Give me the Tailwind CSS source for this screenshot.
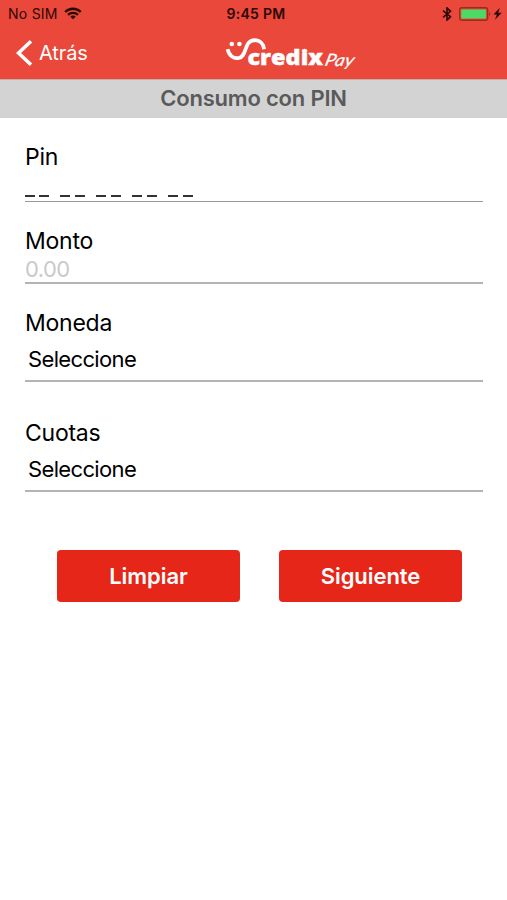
<!DOCTYPE html>
<html lang="es">
<head>
<meta charset="utf-8">
<title>Consumo con PIN</title>
<script src="https://cdn.jsdelivr.net/npm/@tailwindcss/browser@4"></script>
</head>
<body class="bg-white font-['Inter','Liberation_Sans',sans-serif] text-black">
<div class="flex h-[900px] w-[507px] flex-col overflow-hidden bg-white">
  <header class="h-[79px] shrink-0 bg-[#e9483b]">
    <div class="grid h-[27px] grid-cols-3 items-center pl-[8px] pr-[5px] text-[#2b0906]">
      <div class="flex items-center gap-[6px]">
        <span class="text-[14px] leading-[27px] tracking-[0.25px]">No SIM</span>
        <svg class="h-[13px] w-[18px]" viewBox="0 0 18 13" fill="none" stroke="currentColor" stroke-width="2.3">
          <path d="M1.2 5a11 11 0 0 1 15.6 0M4 7.9a7.1 7.1 0 0 1 10 0"/>
          <path d="M9 12.3 6.3 9.8a3.8 3.8 0 0 1 5.4 0Z" fill="currentColor" stroke="none"/>
        </svg>
      </div>
      <span class="pl-[2px] text-center text-[14px] font-semibold leading-[27px] tracking-[0.3px]">9:45 PM</span>
      <div class="flex items-center justify-end">
        <svg class="mr-[7px] h-[14px] w-[10px]" viewBox="0 0 10 14" fill="none" stroke="currentColor" stroke-width="1.6"><path d="m1 3.7 7.5 6L5 13V1l3.5 3.3L1 10.3"/></svg>
        <svg class="mr-[2px] h-[14px] w-[32px]" viewBox="0 0 32 14"><rect x=".6" y=".8" width="28" height="12.4" rx="2" fill="#e9483b" stroke="#962d20" stroke-width="1.4"/><rect x="2.3" y="2.5" width="24.6" height="9" rx=".6" fill="#4cd964"/><path d="M30.2 5v4c1.4-.5 1.4-3.5 0-4" fill="#962d20"/></svg>
        <svg class="h-[13px] w-[9px]" viewBox="0 0 9 13" fill="currentColor"><path d="M6.8.8.5 7.4h3.3L2 12.7 8.7 5.8H5.2z"/></svg>
      </div>
    </div>
    <div class="flex h-[52px] text-white">
      <div class="flex w-[225px] items-center pl-[16px]">
        <svg class="h-[28px] w-[17px]" viewBox="0 0 17 28" fill="none" stroke="white" stroke-width="3.6"><path d="M15 2.2 2.5 14 15 25.8"/></svg>
        <span class="ml-[6px] text-[20px] leading-[24px] tracking-[-0.1px]">Atrás</span>
      </div>
      <svg class="mt-[9px] h-[38px] w-[132px]" viewBox="0 0 132 38" fill="white">
        <circle cx="6.8" cy="8" r="2.3"/><circle cx="14.4" cy="8" r="2.3"/>
        <path d="M2.6 13.2c1.3 6.3 6 9.9 11.2 8.8C22.6 20.2 18.5 4.6 29.5 4.2c5.4 0 9 3.6 9.6 9" fill="none" stroke="white" stroke-width="3.7"/>
        <text x="22.5" y="28.8" font-family="Open Sans" font-weight="800" font-size="21.5" textLength="75.5" lengthAdjust="spacingAndGlyphs" stroke="white" stroke-width=".4">credix</text>
        <g transform="translate(99 30) skewX(-14)"><text font-family="Lato" font-style="italic" font-size="17" textLength="29" lengthAdjust="spacingAndGlyphs" stroke="white" stroke-width=".2">Pay</text></g>
      </svg>
    </div>
  </header>
  <h1 class="h-[39px] shrink-0 border-t border-[#c4aeac] bg-[#d3d3d3] text-center text-[22px] font-semibold leading-[37px] tracking-[-0.2px] text-[#5a5a5a]">Consumo con PIN</h1>
  <main class="pl-[25px] pr-[24px] text-[23px] leading-[28px] tracking-[-0.25px]">
    <section class="h-[84px] border-b border-[#999] pt-[25px]">
      <div>Pin</div>
      <div class="mt-[24px] flex gap-[11px]">
        <div class="flex gap-[4px]"><i class="h-[2px] w-[10px] bg-[#333]"></i><i class="h-[2px] w-[10px] bg-[#333]"></i></div>
        <div class="flex gap-[5px]"><i class="h-[2px] w-[10px] bg-[#333]"></i><i class="h-[2px] w-[10px] bg-[#333]"></i></div>
        <div class="flex gap-[5px]"><i class="h-[2px] w-[10px] bg-[#333]"></i><i class="h-[2px] w-[10px] bg-[#333]"></i></div>
        <div class="flex gap-[5px]"><i class="h-[2px] w-[10px] bg-[#333]"></i><i class="h-[2px] w-[10px] bg-[#333]"></i></div>
        <div class="flex gap-[5px]"><i class="h-[2px] w-[10px] bg-[#333]"></i><i class="h-[2px] w-[10px] bg-[#333]"></i></div>
      </div>
    </section>
    <section class="h-[82px] border-b-2 border-[#b4b4b4] pt-[25px]">
      <div>Monto</div>
      <div class="text-[22px] tracking-[-0.6px] text-[#c9c9cc]">0.00</div>
    </section>
    <section class="h-[98px] border-b-2 border-[#b4b4b4] pt-[25px]">
      <div>Moneda</div>
      <div class="mt-[8px] pl-[3px] text-[22px] tracking-[-0.65px]">Seleccione</div>
    </section>
    <section class="h-[110px] border-b-2 border-[#b4b4b4] pt-[37px]">
      <div>Cuotas</div>
      <div class="mt-[8px] pl-[3px] text-[22px] tracking-[-0.65px]">Seleccione</div>
    </section>
    <div class="mt-[58px] flex gap-[39px] pl-[32px] text-[22px] font-semibold tracking-[-0.05px] text-white">
      <button class="h-[52px] w-[183px] rounded-[4px] bg-[#e52618]">Limpiar</button>
      <button class="h-[52px] w-[183px] rounded-[4px] bg-[#e52618]">Siguiente</button>
    </div>
  </main>
</div>
</body>
</html>
